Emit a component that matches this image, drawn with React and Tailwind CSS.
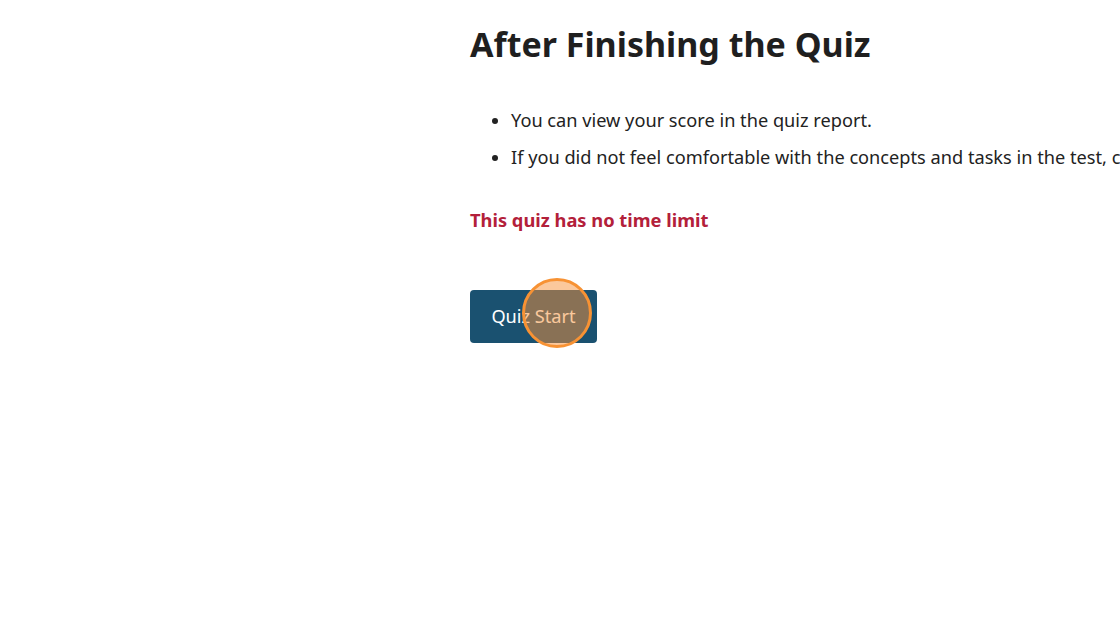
export default function App() {
  const font = { fontFamily: '"Noto Sans", "Open Sans", sans-serif' };
  return (
    <div className="w-[1120px] h-[626px] bg-white overflow-hidden" style={font}>
      <div className="pl-[470px] pt-[24px]">
        <h1 className="text-[34px] leading-[41px] font-bold text-[#1f1f1f] whitespace-nowrap">After Finishing the Quiz</h1>
        <ul className="list-disc pl-[41px] mt-[42px] text-[18.2px] leading-[27px] text-[#222222] flex flex-col gap-[10px] whitespace-nowrap">
          <li>You can view your score in the quiz report.</li>
          <li>If you did not feel comfortable with the concepts and tasks in the test, consider reviewing the course material before retaking it.</li>
        </ul>
        <p className="mt-[35px] text-[18.3px] leading-[27px] font-bold text-[#b3203a]">This quiz has no time limit</p>
        <div className="mt-[57px] relative w-fit">
          <button className="h-[53px] w-[127px] rounded-[4px] bg-[#1a5170] text-white text-[18.2px] leading-[27px]">Quiz Start</button>
          <div className="absolute left-[52px] top-[-12px] w-[70px] h-[70px] rounded-full border-[3px] border-[#f79234] bg-[#f7923a]/50"></div>
        </div>
      </div>
    </div>
  );
}
